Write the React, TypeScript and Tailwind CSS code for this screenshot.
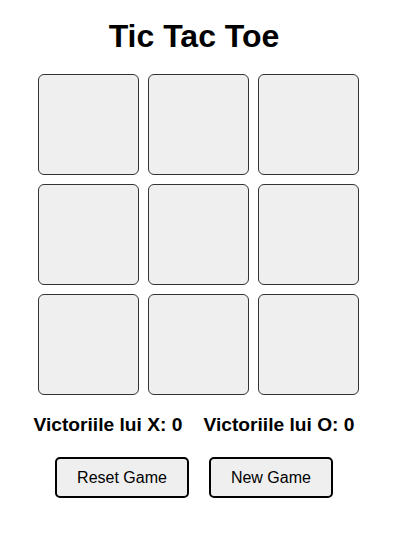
import React, { useState } from "react"

export default function App() {
    const [cells, setCells] = useState<(string | null)[]>(Array(9).fill(null))
    const [xTurn, setXTurn] = useState(true)
    const [wins, setWins] = useState({ X: 0, O: 0 })

    const play = (i: number) => {
        if (cells[i]) return
        const next = cells.slice()
        next[i] = xTurn ? "X" : "O"
        setCells(next)
        setXTurn(!xTurn)
    }

    const reset = () => {
        setCells(Array(9).fill(null))
        setXTurn(true)
    }

    const newGame = () => {
        reset()
        setWins({ X: 0, O: 0 })
    }

    return (
        <div className="w-[388px] flex flex-col items-center text-black font-['Liberation_Sans',Arial,sans-serif]">
            <h1 className="mt-[18px] mb-[19px] text-[32px] leading-[37px] font-bold">Tic Tac Toe</h1>
            <div className="self-start ml-[38px] grid grid-cols-[repeat(3,101px)] grid-rows-[repeat(3,101px)] gap-[9px]">
                {cells.map((c, i) => (
                    <button
                        key={i}
                        onClick={() => play(i)}
                        className="w-[101px] h-[101px] bg-[#efefef] border border-[#333] rounded-[6px] text-[40px] font-bold"
                    >
                        {c}
                    </button>
                ))}
            </div>
            <div className="mt-[19px] flex gap-[21px] text-[19.2px] leading-[22px] font-bold">
                <span>Victoriile lui X: {wins.X}</span>
                <span>Victoriile lui O: {wins.O}</span>
            </div>
            <div className="mt-[21px] flex gap-[20px]">
                <button onClick={reset} className="h-[41px] px-5 bg-[#efefef] border-2 border-black rounded-[5px] text-[16px]">
                    Reset Game
                </button>
                <button onClick={newGame} className="h-[41px] px-5 bg-[#efefef] border-2 border-black rounded-[5px] text-[16px]">
                    New Game
                </button>
            </div>
        </div>
    )
}
